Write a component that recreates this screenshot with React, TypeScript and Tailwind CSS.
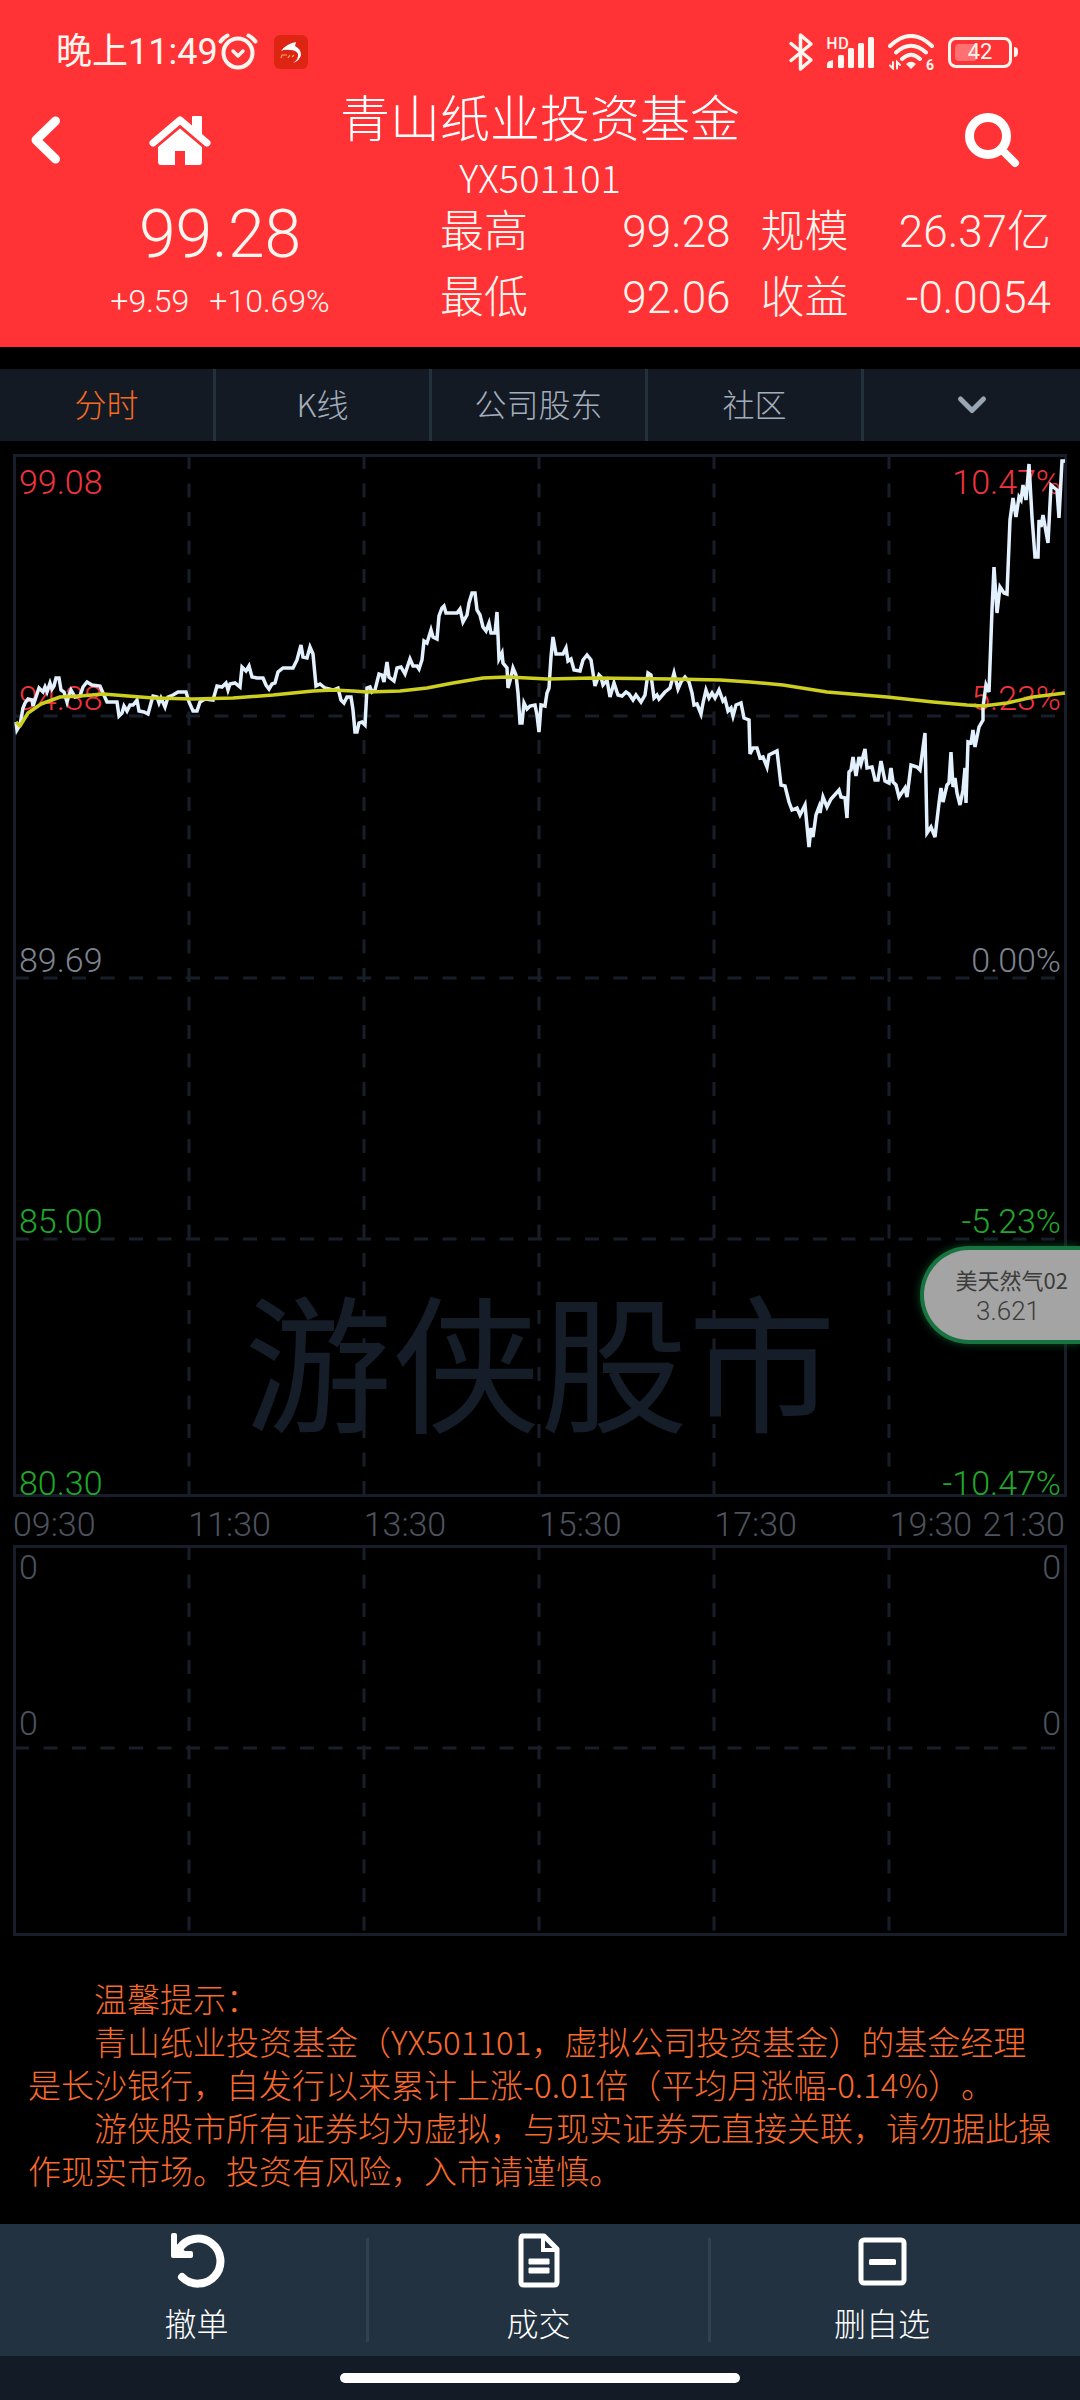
import React, { useState } from 'react';
import clsx from 'clsx';

const tabs = ['分时', 'K线', '公司股东', '社区'];

const stats = [
  { label: '最高', value: '99.28' },
  { label: '规模', value: '26.37亿' },
  { label: '最低', value: '92.06' },
  { label: '收益', value: '-0.0054' },
];

const times = ['09:30', '11:30', '13:30', '15:30', '17:30', '19:30'];

const scale = [
  { price: '94.38', percent: '5.23%', color: 'text-[#f0333f]' },
  { price: '89.69', percent: '0.00%', color: 'text-[#7d8490]' },
  { price: '85.00', percent: '-5.23%', color: 'text-[#1fa82a]' },
  { price: '80.30', percent: '-10.47%', color: 'text-[#1fa82a]' },
];

const pricePoints =
  '3,268 4,276 7,271 10,254 12,249 15,245 19,246 20,252 23,243 26,234 30,238 32,233 34,238 37,229 39,235 41,232 43,224 46,224 48,236 51,238 54,248 56,241 58,236 62,243 67,242 70,233 74,228 79,231 87,232 90,239 94,248 104,248 106,262 109,259 111,252 114,257 117,251 120,251 124,246 126,257 131,258 135,260 138,249 140,242 144,243 146,249 148,244 152,253 155,243 160,241 165,238 173,238 176,248 180,257 184,257 187,248 192,245 200,246 204,232 209,233 213,229 215,236 217,230 222,229 227,233 229,213 233,217 236,212 239,223 244,224 250,224 253,231 256,235 259,230 262,229 265,218 270,214 280,214 284,206 288,191 290,203 294,204 297,193 300,200 303,232 307,230 312,234 320,236 325,234 328,246 331,249 334,243 338,243 340,256 342,278 344,278 346,269 349,268 352,271 354,234 357,233 359,238 362,236 366,220 369,221 371,228 374,208 376,223 381,227 384,214 388,213 392,220 397,205 400,212 404,212 406,215 409,206 411,187 414,189 418,176 420,183 424,185 426,162 429,154 431,152 433,159 444,159 447,155 450,168 454,161 456,149 459,139 462,139 464,156 467,161 470,173 473,177 476,169 478,179 482,179 484,158 486,205 489,199 490,209 494,214 495,234 498,223 500,214 503,221 505,239 507,269 509,269 511,249 514,255 517,252 522,251 524,261 526,278 528,251 532,252 534,239 536,234 538,203 540,183 543,200 550,200 553,194 555,207 558,205 561,216 567,217 570,206 574,201 578,206 580,219 582,232 586,221 588,223 590,231 594,226 597,243 601,229 605,241 609,242 613,238 616,240 620,246 623,241 628,248 632,241 635,219 638,221 641,244 644,241 646,245 652,238 657,234 661,219 665,235 668,228 672,223 676,228 679,239 681,251 684,250 688,260 690,249 693,236 696,244 699,239 702,244 706,236 710,247 712,245 715,257 718,254 720,262 723,251 728,249 731,264 736,266 737,300 740,294 744,294 747,304 750,303 754,313 756,301 764,297 768,331 772,332 776,348 779,356 784,354 787,361 792,351 796,393 798,374 800,383 803,361 806,353 807,359 810,343 814,353 818,345 826,336 828,343 832,344 834,364 836,318 838,316 840,303 843,322 846,303 848,310 852,295 854,314 859,313 862,326 865,326 868,307 872,327 876,329 878,314 880,328 883,331 886,343 892,334 894,343 898,311 904,313 907,316 912,279 914,379 918,373 922,383 926,349 928,334 930,348 934,331 936,329 938,298 940,333 942,324 944,339 947,351 950,336 952,314 953,349 955,288 958,289 960,276 962,293 966,273 970,266 970,253 973,231 976,238 979,156 981,113 984,159 987,133 991,139 994,140 997,66 1000,44 1003,63 1006,43 1008,46 1010,31 1013,46 1016,10 1019,63 1022,103 1025,103 1026,66 1028,73 1030,61 1032,72 1035,89 1038,31 1044,36 1046,64 1049,7 1052,7';

const averagePoints =
  '3,268 7,272 15,259 28,250 47,243 67,242 90,240 140,244 180,245 220,244 260,241 300,237 320,236 340,237 354,238 387,237 414,234 440,229 470,224 494,223 534,225 580,224 660,225 707,226 737,228 770,231 814,238 874,243 920,248 954,251 970,252 994,249 1020,243 1052,239';

const columns = [176, 351, 526, 701, 876];

const StatusBar: React.FC = () => (
  <div className="flex h-20 items-center justify-between pt-6 pl-[56px] pr-[62px]">
    <div className="flex items-center">
      <span className="font-['Roboto','Noto_Sans_CJK_SC',sans-serif] text-[36px] leading-[44px] font-normal">晚上11:49</span>
      {/* Alarm */}
      <svg className="h-10 w-10" viewBox="0 0 40 40" fill="none" stroke="currentColor" strokeLinecap="round">
        <circle cx="20" cy="21" r="14.500" strokeWidth="4" />
        <path d="M15 19l5 5 5-5" strokeWidth="3.500" strokeLinejoin="round" />
        <path d="M2.500 9.500q3-4 7-6M37.500 9.500q-3-4-7-6" strokeWidth="4" />
      </svg>
      {/* Running app */}
      <svg className="ml-4 h-[34px] w-[34px]" viewBox="0 0 34 34">
        <rect width="34" height="34" rx="6" fill="#de2413" />
        <path d="M7 16Q12 9 22 7L21 11Q27 14 27 20Q26 25 19 28Q25 24 24 19Q22 15 16 15Q11 14 7 16Z" fill="#fff" />
        <path d="M7 23l1-3h5M14 23l2-3M18 22l2-2" stroke="#e8b25c" strokeWidth="1.200" fill="none" />
      </svg>
    </div>
    <div className="flex items-center">
      {/* Bluetooth */}
      <svg className="h-10 w-[26px]" viewBox="0 0 26 40" fill="none" stroke="currentColor" strokeWidth="3.500" strokeLinejoin="round" strokeLinecap="round">
        <path d="M3 11.500L23 28 12.500 37V3L23 12 3 28.500" />
      </svg>
      {/* Signal */}
      <div className="relative ml-3 h-8 w-[50px]">
        <svg className="h-8 w-[50px]" viewBox="0 0 50 32" fill="currentColor">
          <path d="M1 32v-4q0-3 6-4v8z" />
          <rect x="12" y="19" width="6" height="13" rx="1.500" />
          <rect x="22" y="12" width="6" height="20" rx="1.500" />
          <rect x="32" y="7" width="6" height="25" rx="1.500" />
          <rect x="42" y="1" width="6" height="31" rx="1.500" />
        </svg>
        <span className="absolute -top-0.5 left-0 text-[16px] leading-4 font-medium">HD</span>
      </div>
      {/* Wi-Fi */}
      <div className="relative ml-3 h-9 w-[46px]">
        <svg className="h-9 w-[46px]" viewBox="0 0 46 36" fill="none" stroke="currentColor" strokeWidth="4" strokeLinecap="round">
          <path d="M2 12Q23-8 44 12M8 18.500Q23 5 38 18.500M14 25Q23 16.500 32 25" />
          <path d="M18 30q5-4.500 10 0l-5 5z" fill="currentColor" stroke="none" />
          <path d="M5 28v6.500l-3-3M9 34.500V28l3 3" strokeWidth="2" />
        </svg>
        <span className="absolute right-0 -bottom-px font-['Roboto',sans-serif] text-[14px] leading-[12px] font-bold">6</span>
      </div>
      {/* Battery */}
      <div className="ml-3.5 flex items-center gap-0.5">
        <div className="relative flex h-[31px] w-[64px] items-center justify-center rounded-lg border-[3px] border-current">
          <div className="absolute inset-y-1 left-1 w-[22px] rounded-sm bg-white/30" />
          <span className="relative font-['Roboto',sans-serif] text-[22px] leading-[22px] font-normal">42</span>
        </div>
        <div className="h-2.5 w-1 rounded-r-sm bg-current" />
      </div>
    </div>
  </div>
);

const Header: React.FC = () => (
  <header className="bg-[#ff3336] pb-[11px] text-[#fff6f0]">
    <StatusBar />
    <div className="grid grid-cols-[1fr_auto_1fr] items-center text-white">
      <div className="flex items-center pb-1 pl-[29px]">
        <button type="button" aria-label="返回">
          <svg className="h-[52px] w-9" viewBox="0 0 36 52" fill="none" stroke="currentColor" strokeWidth="9" strokeLinecap="round" strokeLinejoin="round">
            <path d="M26.500 7L7 26l19.500 19" />
          </svg>
        </button>
        <button type="button" aria-label="首页" className="ml-[83px]">
          <svg className="h-[52px] w-16" viewBox="0 0 64 52" fill="currentColor">
            <path d="M5 29L32 6l27 23" fill="none" stroke="currentColor" strokeWidth="7" strokeLinecap="round" strokeLinejoin="round" />
            <path d="M45 2h8q1 0 1 1v20l-10-9V3q0-1 1-1z" />
            <path d="M32 14.500L54 33v15q0 3-3 3H37V37H27v14H13q-3 0-3-3V33z" />
          </svg>
        </button>
      </div>
      <div className="text-center">
        <h1 className="text-[50px] leading-[70px]">青山纸业投资基金</h1>
        <p className="text-[38px] leading-[54px]">YX501101</p>
      </div>
      <button type="button" aria-label="搜索" className="mr-[58px] justify-self-end pb-1">
        <svg className="h-[60px] w-[60px]" viewBox="0 0 60 60" fill="none" stroke="currentColor" strokeLinecap="round">
          <circle cx="26" cy="26" r="18.500" strokeWidth="9" />
          <path d="M43 43l10 10" strokeWidth="8" />
        </svg>
      </button>
    </div>
    <div className="grid grid-cols-[440fr_640fr]">
      <div className="text-center font-['Roboto',sans-serif]">
        <p className="text-[66px] leading-[62px]">99.28</p>
        <p className="flex justify-center gap-5 text-[32px] leading-[70px]">
          <span>+9.59</span>
          <span>+10.69%</span>
        </p>
      </div>
      <dl className="grid grid-cols-2 content-start gap-x-[30px] gap-y-[18px] pr-[29px] text-[44px] leading-[48px]">
        {stats.map((stat) => (
          <div key={stat.label} className="flex h-12 items-baseline justify-between">
            <dt>{stat.label}</dt>
            <dd className="font-['Roboto','Noto_Sans_CJK_SC',sans-serif]">{stat.value}</dd>
          </div>
        ))}
      </dl>
    </div>
  </header>
);

const PriceChart: React.FC = () => (
  <section aria-label="分时图" className="relative h-[1043px]">
    <svg className="absolute inset-0 h-full w-full" viewBox="0 0 1054 1043" preserveAspectRatio="none" fill="none" stroke="#181e29" strokeWidth="3">
      {columns.map((x) => (
        <path key={x} d={`M${x} 1V1041`} strokeDasharray="14 14.500" />
      ))}
      {[262, 524, 785].map((y) => (
        <path key={y} d={`M2 ${y}H1052`} strokeDasharray="14 14.500" />
      ))}
      <rect x="1.500" y="1.500" width="1051" height="1040" />
    </svg>
    <div className="absolute inset-x-0 bottom-[60px] text-center text-[148px] leading-[160px] font-normal text-[#141d28]">
      游侠股市
    </div>
    <div className="absolute inset-0 grid grid-rows-[262fr_262fr_261fr_258fr] px-1.5 font-['Roboto',sans-serif] text-[34px] leading-6">
      {scale.map((row, i) => (
        <div key={row.price} className={clsx('flex flex-col justify-end', row.color, i < 3 ? 'pb-1.5' : 'pb-0.5')}>
          {i === 0 && (
            <div className="mb-auto flex justify-between pt-4">
              <span>99.08</span>
              <span>10.47%</span>
            </div>
          )}
          <div className="flex justify-between">
            <span>{row.price}</span>
            <span>{row.percent}</span>
          </div>
        </div>
      ))}
    </div>
    <svg className="absolute inset-0 h-full w-full" viewBox="0 0 1054 1043" preserveAspectRatio="none" fill="none">
      <polyline points={pricePoints} stroke="#e3f1ff" strokeWidth="3.500" />
      <polyline points={averagePoints} stroke="#cccf1f" strokeWidth="3.500" strokeLinejoin="round" />
    </svg>
    {/* Floating quote */}
    <button
      type="button"
      className="absolute top-[792px] -right-[13px] flex h-[98px] w-[160px] flex-col items-end justify-center rounded-l-full border-4 border-r-0 border-[#17733f] bg-[#a4a4a4] pr-3 text-[#3c3c3c] shadow-[0_0_8px_#0d4a28]"
    >
      <span className="text-[22px] leading-8 font-normal">美天然气02</span>
      <span className="pr-7 font-['Roboto',sans-serif] text-[26px] leading-8">3.621</span>
    </button>
  </section>
);

const TimeAxis: React.FC = () => (
  <div className="grid grid-cols-6 pt-1.5 pr-0.5 font-['Roboto',sans-serif] text-[34px] leading-[42px] text-[#4d535e]">
    {times.map((time) => (
      <div key={time} className="flex justify-between whitespace-nowrap">
        <span>{time}</span>
        {time === '19:30' && <span>21:30</span>}
      </div>
    ))}
  </div>
);

const VolumeChart: React.FC = () => (
  <section aria-label="成交量" className="relative h-[391px] font-['Roboto',sans-serif] text-[34px] leading-6 text-[#4d535e]">
    <svg className="absolute inset-0 h-full w-full" viewBox="0 0 1054 391" preserveAspectRatio="none" fill="none" stroke="#181e29" strokeWidth="3">
      {columns.map((x) => (
        <path key={x} d={`M${x} 1V390`} strokeDasharray="14 14.500" />
      ))}
      <path d="M2 203H1052" strokeDasharray="14 14.500" />
      <rect x="1.500" y="1.500" width="1051" height="388" />
    </svg>
    <div className="relative flex h-1/2 flex-col justify-between px-1.5 pt-2.5 pb-1.5">
      <div className="flex justify-between">
        <span>0</span>
        <span>0</span>
      </div>
      <div className="flex justify-between">
        <span>0</span>
        <span>0</span>
      </div>
    </div>
  </section>
);

const Notice: React.FC = () => (
  <section className="px-7 pt-[41px] pb-8 text-[33px] leading-[43px] text-[#f86a2c] [text-spacing-trim:space-all]">
    <h2 className="indent-[2em]">温馨提示：</h2>
    <p className="indent-[2em]">
      青山纸业投资基金（YX501101，虚拟公司投资基金）的基金经理是长沙银行，自发行以来累计上涨-0.01倍（平均月涨幅-0.14%）。
    </p>
    <p className="indent-[2em]">
      游侠股市所有证券均为虚拟，与现实证券无直接关联，请勿据此操作现实市场。投资有风险，入市请谨慎。
    </p>
  </section>
);

const actions = [
  {
    label: '撤单',
    icon: (
      <>
        <path d="M11 17A22.500 22.500 0 1 1 14 45" fill="none" stroke="currentColor" strokeWidth="8" strokeLinecap="round" />
        <path d="M3 3q0-2 2-2h2q2 0 2 2v9l8 7h6q2 0 2 2v3q0 2-2 2H5q-2 0-2-2z" />
      </>
    ),
  },
  {
    label: '成交',
    icon: (
      <>
        <path d="M12 4h22l13 13v33q0 3-3 3H14q-3 0-3-3V7q0-3 3-3z" fill="none" stroke="currentColor" strokeWidth="5" strokeLinejoin="round" />
        <path d="M33 4v14h14" fill="none" stroke="currentColor" strokeWidth="4" />
        <path d="M19 27h20v5H19zM19 36h20v5H19z" stroke="currentColor" strokeWidth="1" strokeLinejoin="round" />
      </>
    ),
  },
  {
    label: '删自选',
    icon: (
      <>
        <rect x="8" y="8" width="43" height="43" rx="3" fill="none" stroke="currentColor" strokeWidth="5" />
        <rect x="16" y="27" width="27" height="6" rx="1.500" />
      </>
    ),
  },
];

const BottomBar: React.FC = () => (
  <footer>
    <nav className="grid grid-cols-3 bg-[#223241] px-[27px] py-3.5 text-white">
      {actions.map((action, i) => (
        <button
          key={action.label}
          type="button"
          className={clsx('flex h-[104px] flex-col items-center', i < 2 && 'border-r-[3px] border-[#31414f]')}
        >
          <svg className="-mt-1.5 h-[58px] w-[58px] shrink-0" viewBox="0 0 58 58" fill="currentColor">
            {action.icon}
          </svg>
          <span className="mt-3 text-[32px] leading-10">{action.label}</span>
        </button>
      ))}
    </nav>
    <div className="flex h-11 items-center justify-center bg-[#131b26]">
      <div className="h-2.5 w-[37%] rounded-full bg-white" />
    </div>
  </footer>
);

const App: React.FC = () => {
  const [activeTab, setActiveTab] = useState('分时');

  return (
    <div className="min-h-screen bg-black font-['Noto_Sans_CJK_SC',sans-serif] font-light">
      <Header />
      <nav className="mt-[22px] grid grid-cols-5 bg-[#131a24] text-[32px] leading-[68px]">
        {tabs.map((tab) => (
          <button
            key={tab}
            type="button"
            onClick={() => setActiveTab(tab)}
            className={clsx(
              'h-[72px] border-r-[3px] border-[#22303c] pb-1',
              tab === activeTab ? 'text-[#f86a20]' : 'text-[#a3aebc]'
            )}
          >
            {tab}
          </button>
        ))}
        <button type="button" aria-label="更多" className="flex items-center justify-center text-[#9aa5b4]">
          <svg className="h-7 w-8" viewBox="0 0 32 28" fill="none" stroke="currentColor" strokeWidth="5" strokeLinecap="round" strokeLinejoin="round">
            <path d="M4.500 8L16 19.500 27.500 8" />
          </svg>
        </button>
      </nav>
      <main className="overflow-hidden px-[13px] pt-[13px]">
        <PriceChart />
        <TimeAxis />
        <VolumeChart />
      </main>
      <Notice />
      <BottomBar />
    </div>
  );
};

export default App;
